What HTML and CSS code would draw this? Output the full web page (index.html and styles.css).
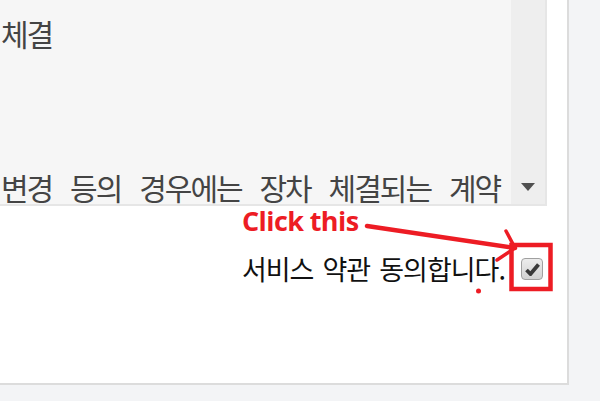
FILE: index.html
```html
<!DOCTYPE html>
<html lang="ko">
<head>
    <title>서비스 약관</title>
    <link rel="stylesheet" href="styles.css">
</head>
<body>
    <div class="panel">
        <div class="terms">
            <div class="terms-text">
                <p>체결</p>
                <p>&nbsp;</p>
                <p>&nbsp;</p>
                <p>&nbsp;</p>
                <p>변경 등의 경우에는 장차 체결되는 계약</p>
            </div>
            <div class="scrollbar"><span class="arrow-down"></span></div>
        </div>
        <div class="agree-row">
            <label for="agree">서비스 약관 동의합니다.</label>
            <span class="checkbox" id="agree">
                <svg width="15" height="13" viewBox="0 0 15 13"><path d="M1.5 7 L5.5 11 L13.5 1.5" fill="none" stroke="#3a3a3a" stroke-width="3.8"/></svg>
            </span>
        </div>
    </div>

    <div class="note">
        <span class="note-text">Click this</span>
        <svg class="note-marks" width="600" height="401" viewBox="0 0 600 401">
            <path d="M367 226 L515 248" stroke="#ed1c24" stroke-width="4.5" stroke-linecap="round" fill="none"/>
            <path d="M506 231 L515 248 L497 260" stroke="#ed1c24" stroke-width="3.5" stroke-linecap="round" fill="none"/>
            <rect x="511.5" y="245" width="39" height="44" stroke="#ed1c24" stroke-width="4.5" fill="none"/>
            <circle cx="478.5" cy="291" r="2.5" fill="#ed1c24"/>
        </svg>
    </div>
</body>
</html>
```

FILE: styles.css
```css
body {
    margin: 0;
    background-color: #f3f4f6;
    font-family: "Noto Sans CJK KR", "Noto Sans", sans-serif;
}
.panel {
    width: 567px;
    height: 383px;
    background: #ffffff;
    border-right: 2px solid #dcdcdc;
    border-bottom: 2px solid #dcdcdc;
}
.terms {
    display: flex;
    width: 545px;
    height: 204px;
    background: #f6f6f6;
    border-right: 2px solid #e6e6e6;
    border-bottom: 2px solid #e6e6e6;
    overflow: hidden;
}
.terms-text {
    flex: 1;
    overflow: hidden;
    white-space: nowrap;
    padding-top: 14px;
    color: #444444;
    font-size: 30px;
    letter-spacing: -2px;
    line-height: 38.5px;
    word-spacing: 11.5px;
}
.terms-text p {
    margin: 0;
    padding-left: 1px;
}
.scrollbar {
    width: 34px;
    background: #eeeeee;
    display: flex;
    flex-direction: column;
    justify-content: flex-end;
    align-items: center;
    padding-bottom: 13px;
    box-sizing: border-box;
}
.arrow-down {
    width: 0;
    height: 0;
    border-left: 7px solid transparent;
    border-right: 7px solid transparent;
    border-top: 8px solid #505050;
}
.agree-row {
    width: 547px;
    display: flex;
    justify-content: flex-end;
    align-items: center;
    gap: 16px;
    padding-right: 4px;
    box-sizing: border-box;
    margin-top: 46px;
}
.agree-row label {
    color: #111111;
    font-size: 27px;
    letter-spacing: -1px;
    word-spacing: 2.5px;
    line-height: 34px;
}
.checkbox {
    width: 22px;
    height: 22px;
    box-sizing: border-box;
    border: 1px solid #a0a0a0;
    border-radius: 4px;
    background: linear-gradient(#ececec, #d2d2d2);
    display: flex;
    align-items: center;
    justify-content: center;
}
.note {
    position: absolute;
    left: 0;
    top: 0;
    width: 600px;
    height: 401px;
    pointer-events: none;
}
.note-text {
    position: absolute;
    left: 242px;
    top: 202px;
    color: #ed1c24;
    font-family: "Open Sans", sans-serif;
    font-weight: bold;
    font-size: 27px;
    letter-spacing: -0.6px;
}
.note-marks {
    position: absolute;
    left: 0;
    top: 0;
}
```
